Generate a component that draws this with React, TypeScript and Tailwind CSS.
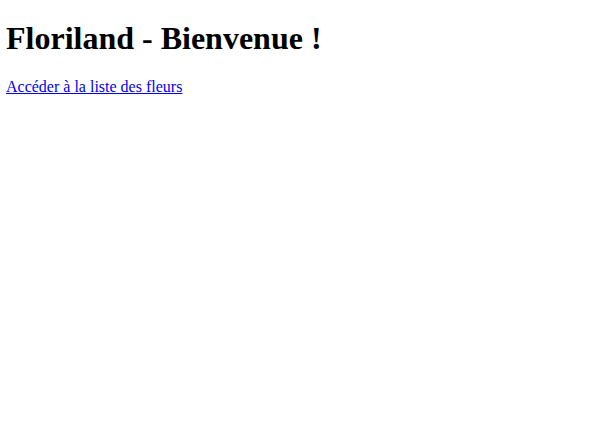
export default function App() {
  return (
    <div className="min-h-screen bg-white px-[6px] pt-[6px] text-black" style={{ fontFamily: '"Liberation Serif", serif' }}>
      <h1 className="mt-[13.5px] mb-[21.44px] text-[32px] font-bold leading-[normal]">Floriland - Bienvenue !</h1>
      <p className="my-[16px] text-[16px] leading-[normal]">
        <a href="#" className="text-[#0000ee] underline">Accéder à la liste des fleurs</a>
      </p>
    </div>
  );
}
